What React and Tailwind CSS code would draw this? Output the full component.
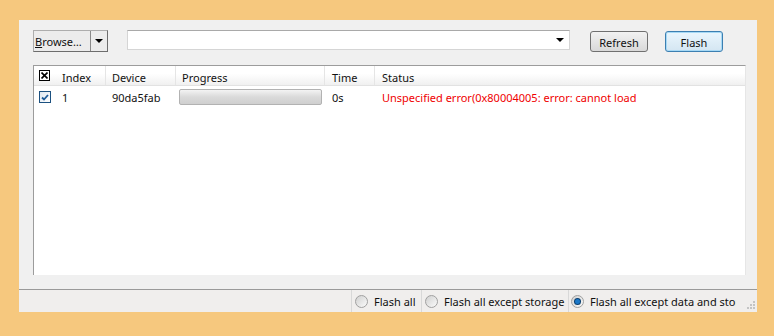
import React from "react";

function Radio({ checked }) {
  return (
    <span className="relative inline-block w-[13px] h-[13px] rounded-full border border-[#a0a0a0] bg-gradient-to-br from-[#d0d0d0] to-[#fbfbfb] shrink-0">
      {checked && (
        <span className="absolute left-[3px] top-[3px] w-[5px] h-[5px] rounded-full bg-[#1b78c8] shadow-[0_0_0_1px_#0b3f70]" />
      )}
    </span>
  );
}

export default function App() {
  const font = { fontFamily: '"Noto Sans", "Open Sans", sans-serif' };
  return (
    <div className="w-[774px] h-[336px] bg-[#f6c87e] pt-[20px] pl-[19px]" style={font}>
      <div className="w-[738px] h-[292px] bg-[#f0f0f0] flex flex-col text-[11px] text-[#111]">
        {/* toolbar */}
        <div className="flex items-start pl-[14px] pt-[10px] h-[45px]">
          <div className="flex h-[22px] w-[75px] border border-[#adadad] bg-[#ececec] border-b-[#6d6d6d] border-r-[#6d6d6d]">
            <div className="flex-1 flex items-center pl-[1px] pt-[1px] leading-none">
              <span><span className="underline">B</span>rowse…</span>
            </div>
            <div className="w-[17px] border-l border-[#8a8a8a] flex items-center justify-center">
              <span className="w-0 h-0 border-l-[4px] border-r-[4px] border-t-[4px] border-l-transparent border-r-transparent border-t-black" />
            </div>
          </div>
          <div className="ml-[19px] w-[443px] h-[20px] bg-white border border-[#d5d5d5] border-t-[#a9a9a9] flex items-center justify-end pr-[5px]">
            <span className="w-0 h-0 border-l-[4px] border-r-[4px] border-t-[4px] border-l-transparent border-r-transparent border-t-black" />
          </div>
          <button className="ml-[20px] mt-[1px] w-[58px] h-[21px] rounded-[3px] border border-[#707070] bg-gradient-to-b from-[#f2f2f2] to-[#d9d9d9] flex items-center justify-center pt-[1px] leading-none">
            Refresh
          </button>
          <button className="ml-[17px] mt-[1px] w-[58px] h-[21px] rounded-[3px] border border-[#3c7fb1] bg-gradient-to-b from-[#eaf6fd] to-[#d4e6f2] shadow-[inset_0_0_0_1px_#a7d9f5] flex items-center justify-center pt-[1px] leading-none">
            Flash
          </button>
        </div>

        {/* list */}
        <div className="ml-[14px] w-[713px] h-[210px] bg-white border-l border-t border-[#9c9c9c] border-r border-r-[#e6e6e6] flex flex-col">
          <div className="h-[20px] flex items-center bg-gradient-to-b from-white from-40% to-[#f0f0f0] border-b border-[#e2e2e2] leading-none">
            <div className="w-[21px] h-full flex items-center justify-center">
              <span className="relative w-[11px] h-[11px] border border-black bg-white flex items-center justify-center">
                <svg width="7" height="7" viewBox="0 0 7 7">
                  <path d="M0.5 0.5 L6.5 6.5 M6.5 0.5 L0.5 6.5" stroke="black" strokeWidth="1.6" />
                </svg>
              </span>
            </div>
            <div className="w-[51px] h-full flex items-center pl-[7px] pt-[3px] border-r border-[#e5e5e5]">Index</div>
            <div className="w-[70px] h-full flex items-center pl-[6px] pt-[3px] border-r border-[#e5e5e5]">Device</div>
            <div className="w-[149px] h-full flex items-center pl-[6px] pt-[3px] border-r border-[#e5e5e5]">Progress</div>
            <div className="w-[50px] h-full flex items-center pl-[7px] pt-[3px] border-r border-[#e5e5e5]">Time</div>
            <div className="flex-1 h-full flex items-center pl-[7px] pt-[3px]">Status</div>
          </div>
          <div className="h-[22px] flex items-center leading-none">
            <div className="w-[21px] flex items-center justify-center">
              <span className="w-[12px] h-[12px] border border-[#1c5180] bg-gradient-to-br from-[#dfe8f1] to-white flex items-center justify-center">
                <svg width="8" height="7" viewBox="0 0 8 7">
                  <path d="M1 3.5 L3 5.5 L7 1" stroke="#1f5c99" strokeWidth="1.8" fill="none" />
                </svg>
              </span>
            </div>
            <div className="w-[51px] pl-[7px]">1</div>
            <div className="w-[70px] pl-[6px]">90da5fab</div>
            <div className="w-[149px] pl-[3px]">
              <div className="w-[143px] h-[16px] rounded-[2px] border border-[#b2b2b2] bg-gradient-to-b from-[#f3f3f3] via-[#dadada] to-[#cfcfcf]" />
            </div>
            <div className="w-[50px] pl-[7px]">0s</div>
            <div className="flex-1 pl-[7px] text-[#f00000] whitespace-nowrap">Unspecified error(0x80004005: error: cannot load</div>
          </div>
        </div>

        {/* status bar */}
        <div className="mt-[14px] h-[23px] border-t border-[#9a9a9a] bg-[#f0eeed] flex items-center leading-none">
          <div className="flex-1" />
          <div className="h-full flex items-center border-l border-[#d8d8d8] pl-[3px] w-[70px]">
            <Radio />
            <span className="ml-[6px] pt-[1px]">Flash all</span>
          </div>
          <div className="h-full flex items-center border-l border-[#d8d8d8] pl-[3px] w-[147px]">
            <Radio />
            <span className="ml-[6px] pt-[1px] whitespace-nowrap">Flash all except storage</span>
          </div>
          <div className="h-full flex items-center border-l border-[#d8d8d8] pl-[2px] w-[168px] overflow-hidden">
            <Radio checked />
            <span className="ml-[6px] pt-[1px] whitespace-nowrap">Flash all except data and storage</span>
          </div>
          <div className="h-full w-[21px] flex items-end justify-end pb-[2px] pr-[1px]">
            <svg width="10" height="10" viewBox="0 0 10 10">
              <rect x="7" y="1" width="2" height="2" fill="#c4c4c4" />
              <rect x="4" y="4" width="2" height="2" fill="#c4c4c4" />
              <rect x="7" y="4" width="2" height="2" fill="#c4c4c4" />
              <rect x="1" y="7" width="2" height="2" fill="#c4c4c4" />
              <rect x="4" y="7" width="2" height="2" fill="#c4c4c4" />
              <rect x="7" y="7" width="2" height="2" fill="#c4c4c4" />
            </svg>
          </div>
        </div>
      </div>
    </div>
  );
}
